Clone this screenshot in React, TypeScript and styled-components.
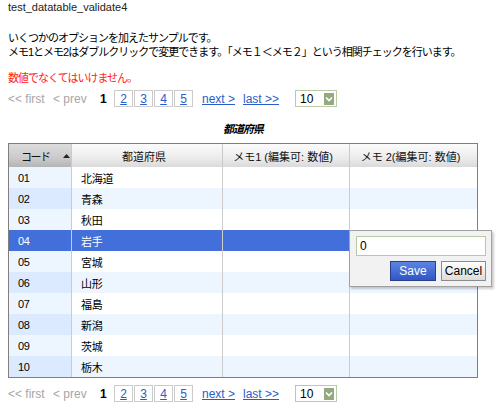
import styled, { createGlobalStyle } from "styled-components";

const GlobalStyle = createGlobalStyle`
  body {
    margin: 0;
    background: #fff;
    color: #000;
    font-family: "Liberation Sans", "Noto Sans CJK JP", sans-serif;
  }
`;

const Page = styled.div`
  padding: 0 8px;
  width: 484px;
`;

const Title = styled.div`
  font-size: 11px;
  line-height: 14px;
  color: #222;
`;

const Desc = styled.div`
  margin-top: 17px;
  font-size: 11px;
  line-height: 14px;
  letter-spacing: -1px;
`;

const ErrorText = styled.div`
  margin-top: 12px;
  font-size: 11px;
  line-height: 14px;
  letter-spacing: -1px;
  color: #f22;
`;

const Pager = styled.div<{ $top: number }>`
  display: flex;
  align-items: center;
  height: 17px;
  margin-top: ${(p) => p.$top}px;
  font-size: 12px;
`;

const Disabled = styled.span<{ $w: number }>`
  width: ${(p) => p.$w}px;
  color: #a6a6a6;
`;

const Current = styled.span`
  width: 14px;
  font-weight: bold;
`;

const PageBox = styled.a`
  width: 19px;
  height: 17px;
  box-sizing: border-box;
  margin-right: 1px;
  border: 1px solid #cbcbcb;
  display: flex;
  align-items: center;
  justify-content: center;
  color: #2a5dc9;
  text-decoration: underline;
`;

const NavLink = styled.a<{ $w: number; $left?: number }>`
  width: ${(p) => p.$w}px;
  margin-left: ${(p) => p.$left ?? 0}px;
  color: #2a5dc9;
  text-decoration: underline;
`;

const Select = styled.div`
  width: 42px;
  height: 17px;
  box-sizing: border-box;
  border: 1px solid #b9cba6;
  display: flex;
  align-items: center;
  justify-content: space-between;
  padding: 0 2px 0 4px;
`;

const SelectButton = styled.span`
  width: 10px;
  height: 12px;
  background: #93a97e;
  display: flex;
  align-items: center;
  justify-content: center;
`;

const Caption = styled.div`
  margin-top: 15px;
  width: 470px;
  text-align: center;
  font-size: 11px;
  line-height: 14px;
  font-weight: bold;
  font-style: italic;
  letter-spacing: -1px;
`;

const TableWrap = styled.div`
  position: relative;
  margin-top: 7px;
  width: 470px;
  box-sizing: border-box;
  border: 1px solid #7f7f7f;
`;

const cols = "63px 151px 127px 127px";

const HeaderRow = styled.div`
  display: grid;
  grid-template-columns: ${cols};
  height: 23px;
`;

const HeaderCell = styled.div<{ $sorted?: boolean; $last?: boolean }>`
  box-sizing: border-box;
  border-right: ${(p) => (p.$last ? "none" : "1px solid #cbcbcb")};
  background: ${(p) =>
    p.$sorted
      ? "linear-gradient(#dcdcdc, #cbcbcb 60%, #b4b4b4)"
      : "linear-gradient(#fbfbfb, #ececec 60%, #dadada)"};
  display: flex;
  align-items: center;
  justify-content: ${(p) => (p.$sorted ? "flex-start" : "center")};
  padding: ${(p) => (p.$sorted ? "0 0 0 12px" : "0 6px 0 0")};
  font-size: 11px;
  color: #111;
  white-space: nowrap;
  letter-spacing: ${(p) => (p.$sorted ? "-1.5px" : "0")};
`;

const SortArrow = styled.svg`
  margin-left: 13px;
`;

const BodyRow = styled.div`
  display: grid;
  grid-template-columns: ${cols};
  height: 21px;
`;

const BodyCell = styled.div<{
  $odd: boolean;
  $selected: boolean;
  $sorted?: boolean;
  $last?: boolean;
}>`
  box-sizing: border-box;
  border-right: ${(p) => (p.$last ? "none" : "1px solid #cbcbcb")};
  background: ${(p) =>
    p.$selected
      ? "#426fd9"
      : p.$sorted
      ? p.$odd
        ? "#dbeaff"
        : "#edf5ff"
      : p.$odd
      ? "#edf5ff"
      : "#fff"};
  color: ${(p) => (p.$selected ? "#fff" : "#000")};
  display: flex;
  align-items: center;
  padding-left: 9px;
  font-size: 11px;
  letter-spacing: -0.3px;
`;

const Editor = styled.div`
  position: absolute;
  left: 340px;
  top: 86px;
  width: 143px;
  height: 57px;
  box-sizing: border-box;
  background: #f2f2f2;
  border: 1px solid #a0a0a0;
  box-shadow: 2px 2px 2px rgba(0, 0, 0, 0.2);
  padding: 5px 5px 0 6px;
`;

const EditorInput = styled.input`
  display: block;
  width: 130px;
  height: 20px;
  box-sizing: border-box;
  margin: 0;
  border: 1px solid #b7c9a3;
  padding: 0 3px;
  font-family: "Liberation Sans", sans-serif;
  font-size: 12px;
  background: #fff;
  outline: none;
`;

const ButtonRow = styled.div`
  display: flex;
  justify-content: flex-end;
  gap: 5px;
  margin-top: 5px;
`;

const EditorButton = styled.button<{ $primary?: boolean; $w: number }>`
  width: ${(p) => p.$w}px;
  height: 20px;
  padding: 0;
  font-family: "Liberation Sans", sans-serif;
  font-size: 12px;
  border: 1px solid ${(p) => (p.$primary ? "#2b3f86" : "#8c8c8c")};
  background: ${(p) =>
    p.$primary
      ? "linear-gradient(#5d84e2, #2f57c6)"
      : "linear-gradient(#ffffff, #dcdcdc)"};
  color: ${(p) => (p.$primary ? "#fff" : "#000")};
`;

const rows = [
  ["01", "北海道"],
  ["02", "青森"],
  ["03", "秋田"],
  ["04", "岩手"],
  ["05", "宮城"],
  ["06", "山形"],
  ["07", "福島"],
  ["08", "新潟"],
  ["09", "茨城"],
  ["10", "栃木"],
];

const Paginator = ({ top }: { top: number }) => (
  <Pager $top={top}>
    <Disabled $w={45}>&lt;&lt; first</Disabled>
    <Disabled $w={47}>&lt; prev</Disabled>
    <Current>1</Current>
    {[2, 3, 4, 5].map((n) => (
      <PageBox key={n} href="#">
        {n}
      </PageBox>
    ))}
    <NavLink $w={41} $left={8} href="#">
      next &gt;
    </NavLink>
    <NavLink $w={52} href="#">
      last &gt;&gt;
    </NavLink>
    <Select>
      <span>10</span>
      <SelectButton>
        <svg width="8" height="6" viewBox="0 0 8 6">
          <polyline points="1,1.5 4,4.5 7,1.5" fill="none" stroke="#fff" strokeWidth="1.6" />
        </svg>
      </SelectButton>
    </Select>
  </Pager>
);

export default function App() {
  return (
    <Page>
      <GlobalStyle />
      <Title>test_datatable_validate4</Title>
      <Desc>
        いくつかのオプションを加えたサンプルです。
        <br />
        メモ1とメモ2はダブルクリックで変更できます。「メモ１＜メモ２」という相関チェックを行います。
      </Desc>
      <ErrorText>数値でなくてはいけません。</ErrorText>
      <Paginator top={5} />
      <Caption>都道府県</Caption>
      <TableWrap>
        <HeaderRow>
          <HeaderCell $sorted>
            コード
            <SortArrow width="7" height="4" viewBox="0 0 7 4">
              <polygon points="0,4 3.5,0 7,4" fill="#222" />
            </SortArrow>
          </HeaderCell>
          <HeaderCell>都道府県</HeaderCell>
          <HeaderCell>メモ1 (編集可: 数値)</HeaderCell>
          <HeaderCell $last>メモ 2(編集可: 数値)</HeaderCell>
        </HeaderRow>
        {rows.map(([code, name], i) => {
          const odd = i % 2 === 1;
          const selected = i === 3;
          return (
            <BodyRow key={code}>
              <BodyCell $odd={odd} $selected={selected} $sorted>
                {code}
              </BodyCell>
              <BodyCell $odd={odd} $selected={selected}>
                {name}
              </BodyCell>
              <BodyCell $odd={odd} $selected={selected} />
              <BodyCell $odd={odd} $selected={selected} $last />
            </BodyRow>
          );
        })}
        <Editor>
          <EditorInput defaultValue="0" />
          <ButtonRow>
            <EditorButton $primary $w={46}>
              Save
            </EditorButton>
            <EditorButton $w={45}>Cancel</EditorButton>
          </ButtonRow>
        </Editor>
      </TableWrap>
      <Paginator top={7} />
    </Page>
  );
}
